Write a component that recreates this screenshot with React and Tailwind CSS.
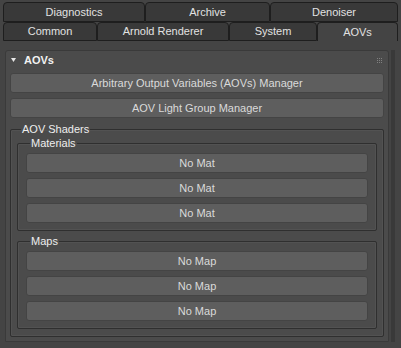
const rowOne = [
  { label: "Diagnostics", w: "w-[142px]" },
  { label: "Archive", w: "w-[125px]" },
  { label: "Denoiser", w: "w-[128px]" },
];

const rowTwo = [
  { label: "Common", w: "w-[94px]" },
  { label: "Arnold Renderer", w: "w-[132px]" },
  { label: "System", w: "w-[88px]" },
  { label: "AOVs", w: "w-[81px]", active: true },
];

const Tab = ({ label, w, active }) => (
  <div
    className={`${w} h-full flex items-center justify-center rounded-t-[4px] border border-[#1e1e1e] text-[11px] text-[#e2e2e2] ${
      active ? "bg-[#444444] border-b-0" : "bg-[#393939]"
    }`}
  >
    {label}
  </div>
);

const MaxButton = ({ children }) => (
  <div className="h-[20px] flex items-center justify-center rounded-[3px] border border-[#444444] bg-[#5e5e5e] text-[11px] text-[#dadada]">
    {children}
  </div>
);

const Group = ({ title, children, className = "" }) => (
  <fieldset
    className={`rounded-[2px] border border-[#2f2f2f] shadow-[inset_0_0_0_1px_#525252] ${className}`}
  >
    <legend className="ml-[4px] px-[1px] text-[11px] leading-[14px] text-[#eeeeee]">
      {title}
    </legend>
    {children}
  </fieldset>
);

export default function App() {
  return (
    <div
      className="w-[401px] h-[348px] bg-[#444444] overflow-hidden flex flex-col"
      style={{ fontFamily: '"Liberation Sans", Arial, sans-serif' }}
    >
      <div className="pt-[2px] pl-[3px] flex flex-col">
        <div className="h-[20px] flex">
          {rowOne.map((t) => (
            <Tab key={t.label} {...t} />
          ))}
        </div>
        <div className="h-[19px] flex">
          {rowTwo.map((t) => (
            <Tab key={t.label} {...t} />
          ))}
        </div>
      </div>

      <div className="flex pt-[9px] pl-[5px]">
        <div className="w-[384px] rounded-t-[3px] border border-[#3a3a3a] bg-[#4b4b4b] pb-[4px]">
          <div className="h-[18px] flex items-center pl-[5px] pr-[6px]">
            <svg width="5" height="4" viewBox="0 0 5 4" className="mr-[8px]">
              <path d="M0 0 L5 0 L2.5 4 Z" fill="#e8e8e8" />
            </svg>
            <span className="text-[11px] font-bold text-[#f2f2f2]">AOVs</span>
            <div className="ml-auto grid grid-cols-3 gap-[1px]">
              {Array.from({ length: 9 }).map((_, i) => (
                <span key={i} className="w-[1px] h-[1px] bg-[#808080]" />
              ))}
            </div>
          </div>

          <div className="px-[4px] pt-[4px] flex flex-col gap-[5px]">
            <MaxButton>Arbitrary Output Variables (AOVs) Manager</MaxButton>
            <MaxButton>AOV Light Group Manager</MaxButton>
          </div>

          <div className="px-[4px] mt-[4px]">
            <Group title="AOV Shaders" className="pl-[6px] pr-[6px] pb-[7px]">
              <Group title="Materials" className="px-[8px] pb-[7px]">
                <div className="pt-[3px] flex flex-col gap-[5px]">
                  <MaxButton>No Mat</MaxButton>
                  <MaxButton>No Mat</MaxButton>
                  <MaxButton>No Mat</MaxButton>
                </div>
              </Group>
              <Group title="Maps" className="mt-[3px] px-[8px] pb-[7px]">
                <div className="pt-[3px] flex flex-col gap-[5px]">
                  <MaxButton>No Map</MaxButton>
                  <MaxButton>No Map</MaxButton>
                  <MaxButton>No Map</MaxButton>
                </div>
              </Group>
            </Group>
          </div>
        </div>
        <div className="ml-[2px] w-[4px] h-[292px] bg-[#393939]" />
      </div>
    </div>
  );
}
